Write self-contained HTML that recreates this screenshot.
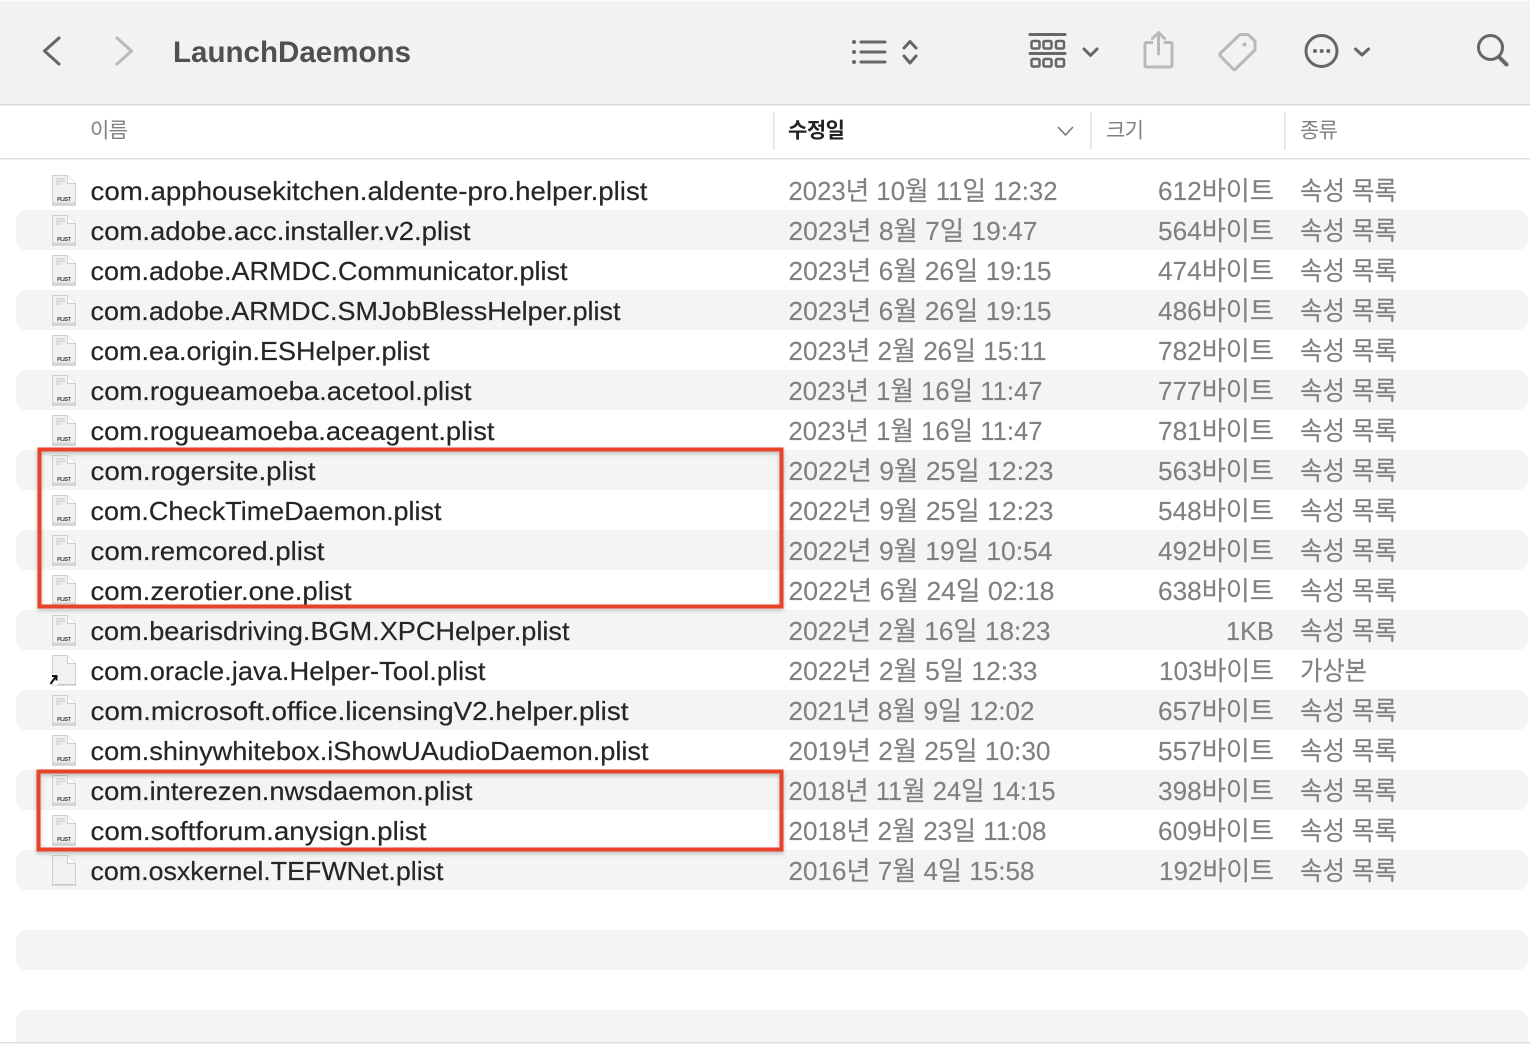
<!DOCTYPE html>
<html lang="ko"><head><meta charset="utf-8"><title>LaunchDaemons</title>
<style>
html,body{margin:0;padding:0;background:#fff;width:1530px;height:1052px;overflow:hidden}
svg{display:block}
text{font-family:"Liberation Sans","Noto Sans CJK KR",sans-serif}
.n{font-size:26px;fill:#262626;stroke:#262626;stroke-width:.2}
.g{font-size:26px;fill:#808080;stroke:#808080;stroke-width:.15}
.h{font-size:21px;fill:#808080}
.p{font-size:5.500px;fill:#444;font-weight:bold}
.s{fill:#f3f5f5}
.t{fill:none;stroke:#666;stroke-width:3;stroke-linecap:round;stroke-linejoin:round}
.l{fill:none;stroke:#b9b9b9;stroke-width:3;stroke-linecap:round;stroke-linejoin:round}
.r{fill:none;stroke:#e8432a;stroke-width:4;filter:drop-shadow(0 2px 2px rgba(0,0,0,.25))}
</style></head><body>
<svg width="1530" height="1052" viewBox="0 0 1530 1052" xmlns="http://www.w3.org/2000/svg">
<defs>
<g id="doc"><path d="M52.500 5.500H67.500L75.500 13.500V34.500H52.500Z" fill="#f1f1f1" stroke="#cfcfcf"/><path d="M67.500 5.500V13.500H75.500" fill="#fff" stroke="#cfcfcf"/><rect x="52" y="34.500" width="24" height="1" fill="#bdbdbd"/></g>
<g id="pl"><use href="#doc"/><path d="M56 9H65M56 11.500H65M56 14H61" stroke="#d0d0d0" stroke-width="1.200"/><rect x="53" y="32" width="22" height="2.500" fill="#dcdcdc"/></g>
</defs>
<rect width="1530" height="1052" fill="#fff"/>
<rect width="1530" height="104" fill="#f2f2f2"/>
<rect width="1530" height="1" fill="#fafafa"/>
<rect y="104" width="1530" height="1.500" fill="#d9d9d9"/>
<rect y="158" width="1530" height="1.500" fill="#dedede"/>
<rect x="773" y="112" width="1.500" height="38" fill="#e2e2e2"/>
<rect x="1090" y="112" width="1.500" height="38" fill="#e2e2e2"/>
<rect x="1284" y="112" width="1.500" height="38" fill="#e2e2e2"/>

<path class="t" d="M59 38L44.500 51L59 64" stroke="#555"/>
<path class="l" d="M117 38L131.500 51L117 64"/>
<text x="173" y="62" font-size="30" font-weight="bold" fill="#505050" textLength="238" lengthAdjust="spacingAndGlyphs">LaunchDaemons</text>

<g fill="#666"><circle cx="854" cy="42" r="2"/><circle cx="854" cy="52" r="2"/><circle cx="854" cy="62" r="2"/></g>
<path class="t" d="M861 42H885M861 52H885M861 62H885"/>
<path class="t" d="M904 48L910 41.500L916 48M904 56L910 63L916 56"/>
<path class="t" d="M1030 34.500H1065M1030 53.500H1065" stroke-linecap="butt"/>
<g fill="none" stroke="#666" stroke-width="2.500"><rect x="1031.500" y="41" width="8" height="7.500" rx="1.500"/><rect x="1043.500" y="41" width="8" height="7.500" rx="1.500"/><rect x="1056" y="41" width="8" height="7.500" rx="1.500"/><rect x="1031.500" y="59" width="8" height="7.500" rx="1.500"/><rect x="1043.500" y="59" width="8" height="7.500" rx="1.500"/><rect x="1056" y="59" width="8" height="7.500" rx="1.500"/></g>
<path class="t" d="M1084 49L1090.500 55.500L1097 49"/>
<path class="l" d="M1152 42.500H1147Q1145 42.500 1145 44.500V65Q1145 67 1147 67H1170Q1172 67 1172 65V44.500Q1172 42.500 1170 42.500H1165M1158.500 54V33M1152.500 38.500L1158.500 32.500L1164.500 38.500"/>
<path class="l" d="M1220 53.500L1240 34.500H1248L1255 41V50L1235 69.500Q1234 70 1233 69L1220 55.500Q1219.500 54.500 1220 53.500Z"/>
<circle cx="1244.500" cy="44.500" r="2" fill="#b9b9b9"/>
<circle class="t" cx="1321.500" cy="51" r="15.500"/>
<g fill="#666"><circle cx="1315" cy="51" r="2"/><circle cx="1321.700" cy="51" r="2"/><circle cx="1328.300" cy="51" r="2"/></g>
<path class="t" d="M1355.500 49L1362 55L1368.500 49"/>
<circle class="t" cx="1490.500" cy="47.500" r="12"/>
<path d="M1499 57L1506.500 64.500" fill="none" stroke="#666" stroke-width="4" stroke-linecap="round"/>

<text class="h" x="90" y="137.500" textLength="38">이름</text>
<text class="h" x="788" y="137.500" textLength="57" font-weight="bold" style="fill:#222">수정일</text>
<path d="M1058 127L1065.500 135L1073 127" fill="none" stroke="#777" stroke-width="1.600"/>
<text class="h" x="1106" y="137.500" textLength="38">크기</text>
<text class="h" x="1300" y="137.500" textLength="38">종류</text>

<rect class="s" x="16" y="210" width="1512" height="40" rx="10"/>
<rect class="s" x="16" y="290" width="1512" height="40" rx="10"/>
<rect class="s" x="16" y="370" width="1512" height="40" rx="10"/>
<rect class="s" x="16" y="450" width="1512" height="40" rx="10"/>
<rect class="s" x="16" y="530" width="1512" height="40" rx="10"/>
<rect class="s" x="16" y="610" width="1512" height="40" rx="10"/>
<rect class="s" x="16" y="690" width="1512" height="40" rx="10"/>
<rect class="s" x="16" y="770" width="1512" height="40" rx="10"/>
<rect class="s" x="16" y="850" width="1512" height="40" rx="10"/>
<rect class="s" x="16" y="930" width="1512" height="40" rx="10"/>
<rect class="s" x="16" y="1010" width="1512" height="40" rx="10"/>
<rect y="1043" width="1530" height="9" fill="#fff"/>
<rect y="1042" width="1530" height="1.500" fill="#dedede"/>

<g transform="translate(0,170)"><use href="#pl"/><text class="p" x="57" y="31" textLength="14">PLIST</text></g>
<g transform="translate(0,210)"><use href="#pl"/><text class="p" x="57" y="31" textLength="14">PLIST</text></g>
<g transform="translate(0,250)"><use href="#pl"/><text class="p" x="57" y="31" textLength="14">PLIST</text></g>
<g transform="translate(0,290)"><use href="#pl"/><text class="p" x="57" y="31" textLength="14">PLIST</text></g>
<g transform="translate(0,330)"><use href="#pl"/><text class="p" x="57" y="31" textLength="14">PLIST</text></g>
<g transform="translate(0,370)"><use href="#pl"/><text class="p" x="57" y="31" textLength="14">PLIST</text></g>
<g transform="translate(0,410)"><use href="#pl"/><text class="p" x="57" y="31" textLength="14">PLIST</text></g>
<g transform="translate(0,450)"><use href="#pl"/><text class="p" x="57" y="31" textLength="14">PLIST</text></g>
<g transform="translate(0,490)"><use href="#pl"/><text class="p" x="57" y="31" textLength="14">PLIST</text></g>
<g transform="translate(0,530)"><use href="#pl"/><text class="p" x="57" y="31" textLength="14">PLIST</text></g>
<g transform="translate(0,570)"><use href="#pl"/><text class="p" x="57" y="31" textLength="14">PLIST</text></g>
<g transform="translate(0,610)"><use href="#pl"/><text class="p" x="57" y="31" textLength="14">PLIST</text></g>
<g transform="translate(0,650)"><use href="#doc"/><rect x="49" y="24" width="9" height="11" rx="1" fill="#fff"/><path d="M50.500 34L55.500 27M52 26H56.500V30.500" fill="none" stroke="#111" stroke-width="2"/></g>
<g transform="translate(0,690)"><use href="#pl"/><text class="p" x="57" y="31" textLength="14">PLIST</text></g>
<g transform="translate(0,730)"><use href="#pl"/><text class="p" x="57" y="31" textLength="14">PLIST</text></g>
<g transform="translate(0,770)"><use href="#pl"/><text class="p" x="57" y="31" textLength="14">PLIST</text></g>
<g transform="translate(0,810)"><use href="#pl"/><text class="p" x="57" y="31" textLength="14">PLIST</text></g>
<g transform="translate(0,850)"><use href="#doc"/></g>

<g transform="translate(0,1)">
<text class="n" x="90.500" y="199" textLength="557" lengthAdjust="spacingAndGlyphs">com.apphousekitchen.aldente-pro.helper.plist</text>
<text class="g" x="788.500" y="199" textLength="269" lengthAdjust="spacingAndGlyphs">2023년 10월 11일 12:32</text>
<text class="g" x="1158" y="199" textLength="116" lengthAdjust="spacingAndGlyphs">612바이트</text>
<text class="g" x="1300" y="199" textLength="97" lengthAdjust="spacingAndGlyphs">속성 목록</text>

<text class="n" x="90.500" y="239" textLength="380" lengthAdjust="spacingAndGlyphs">com.adobe.acc.installer.v2.plist</text>
<text class="g" x="788.500" y="239" textLength="249" lengthAdjust="spacingAndGlyphs">2023년 8월 7일 19:47</text>
<text class="g" x="1158" y="239" textLength="116" lengthAdjust="spacingAndGlyphs">564바이트</text>
<text class="g" x="1300" y="239" textLength="97" lengthAdjust="spacingAndGlyphs">속성 목록</text>

<text class="n" x="90.500" y="279" textLength="477" lengthAdjust="spacingAndGlyphs">com.adobe.ARMDC.Communicator.plist</text>
<text class="g" x="788.500" y="279" textLength="263" lengthAdjust="spacingAndGlyphs">2023년 6월 26일 19:15</text>
<text class="g" x="1158" y="279" textLength="116" lengthAdjust="spacingAndGlyphs">474바이트</text>
<text class="g" x="1300" y="279" textLength="97" lengthAdjust="spacingAndGlyphs">속성 목록</text>

<text class="n" x="90.500" y="319" textLength="530" lengthAdjust="spacingAndGlyphs">com.adobe.ARMDC.SMJobBlessHelper.plist</text>
<text class="g" x="788.500" y="319" textLength="263" lengthAdjust="spacingAndGlyphs">2023년 6월 26일 19:15</text>
<text class="g" x="1158" y="319" textLength="116" lengthAdjust="spacingAndGlyphs">486바이트</text>
<text class="g" x="1300" y="319" textLength="97" lengthAdjust="spacingAndGlyphs">속성 목록</text>

<text class="n" x="90.500" y="359" textLength="339" lengthAdjust="spacingAndGlyphs">com.ea.origin.ESHelper.plist</text>
<text class="g" x="788.500" y="359" textLength="258" lengthAdjust="spacingAndGlyphs">2023년 2월 26일 15:11</text>
<text class="g" x="1158" y="359" textLength="116" lengthAdjust="spacingAndGlyphs">782바이트</text>
<text class="g" x="1300" y="359" textLength="97" lengthAdjust="spacingAndGlyphs">속성 목록</text>

<text class="n" x="90.500" y="399" textLength="381" lengthAdjust="spacingAndGlyphs">com.rogueamoeba.acetool.plist</text>
<text class="g" x="788.500" y="399" textLength="254" lengthAdjust="spacingAndGlyphs">2023년 1월 16일 11:47</text>
<text class="g" x="1158" y="399" textLength="116" lengthAdjust="spacingAndGlyphs">777바이트</text>
<text class="g" x="1300" y="399" textLength="97" lengthAdjust="spacingAndGlyphs">속성 목록</text>

<text class="n" x="90.500" y="439" textLength="404" lengthAdjust="spacingAndGlyphs">com.rogueamoeba.aceagent.plist</text>
<text class="g" x="788.500" y="439" textLength="254" lengthAdjust="spacingAndGlyphs">2023년 1월 16일 11:47</text>
<text class="g" x="1158" y="439" textLength="116" lengthAdjust="spacingAndGlyphs">781바이트</text>
<text class="g" x="1300" y="439" textLength="97" lengthAdjust="spacingAndGlyphs">속성 목록</text>

<text class="n" x="90.500" y="479" textLength="225" lengthAdjust="spacingAndGlyphs">com.rogersite.plist</text>
<text class="g" x="788.500" y="479" textLength="265" lengthAdjust="spacingAndGlyphs">2022년 9월 25일 12:23</text>
<text class="g" x="1158" y="479" textLength="116" lengthAdjust="spacingAndGlyphs">563바이트</text>
<text class="g" x="1300" y="479" textLength="97" lengthAdjust="spacingAndGlyphs">속성 목록</text>

<text class="n" x="90.500" y="519" textLength="351" lengthAdjust="spacingAndGlyphs">com.CheckTimeDaemon.plist</text>
<text class="g" x="788.500" y="519" textLength="265" lengthAdjust="spacingAndGlyphs">2022년 9월 25일 12:23</text>
<text class="g" x="1158" y="519" textLength="116" lengthAdjust="spacingAndGlyphs">548바이트</text>
<text class="g" x="1300" y="519" textLength="97" lengthAdjust="spacingAndGlyphs">속성 목록</text>

<text class="n" x="90.500" y="559" textLength="234" lengthAdjust="spacingAndGlyphs">com.remcored.plist</text>
<text class="g" x="788.500" y="559" textLength="264" lengthAdjust="spacingAndGlyphs">2022년 9월 19일 10:54</text>
<text class="g" x="1158" y="559" textLength="116" lengthAdjust="spacingAndGlyphs">492바이트</text>
<text class="g" x="1300" y="559" textLength="97" lengthAdjust="spacingAndGlyphs">속성 목록</text>

<text class="n" x="90.500" y="599" textLength="261" lengthAdjust="spacingAndGlyphs">com.zerotier.one.plist</text>
<text class="g" x="788.500" y="599" textLength="266" lengthAdjust="spacingAndGlyphs">2022년 6월 24일 02:18</text>
<text class="g" x="1158" y="599" textLength="116" lengthAdjust="spacingAndGlyphs">638바이트</text>
<text class="g" x="1300" y="599" textLength="97" lengthAdjust="spacingAndGlyphs">속성 목록</text>

<text class="n" x="90.500" y="639" textLength="479" lengthAdjust="spacingAndGlyphs">com.bearisdriving.BGM.XPCHelper.plist</text>
<text class="g" x="788.500" y="639" textLength="262" lengthAdjust="spacingAndGlyphs">2022년 2월 16일 18:23</text>
<text class="g" x="1226" y="639" textLength="48" lengthAdjust="spacingAndGlyphs">1KB</text>
<text class="g" x="1300" y="639" textLength="97" lengthAdjust="spacingAndGlyphs">속성 목록</text>

<text class="n" x="90.500" y="679" textLength="395" lengthAdjust="spacingAndGlyphs">com.oracle.java.Helper-Tool.plist</text>
<text class="g" x="788.500" y="679" textLength="249" lengthAdjust="spacingAndGlyphs">2022년 2월 5일 12:33</text>
<text class="g" x="1159" y="679" textLength="115" lengthAdjust="spacingAndGlyphs">103바이트</text>
<text class="g" x="1300" y="679" textLength="67" lengthAdjust="spacingAndGlyphs">가상본</text>

<text class="n" x="90.500" y="719" textLength="538" lengthAdjust="spacingAndGlyphs">com.microsoft.office.licensingV2.helper.plist</text>
<text class="g" x="788.500" y="719" textLength="246" lengthAdjust="spacingAndGlyphs">2021년 8월 9일 12:02</text>
<text class="g" x="1158" y="719" textLength="116" lengthAdjust="spacingAndGlyphs">657바이트</text>
<text class="g" x="1300" y="719" textLength="97" lengthAdjust="spacingAndGlyphs">속성 목록</text>

<text class="n" x="90.500" y="759" textLength="558" lengthAdjust="spacingAndGlyphs">com.shinywhitebox.iShowUAudioDaemon.plist</text>
<text class="g" x="788.500" y="759" textLength="262" lengthAdjust="spacingAndGlyphs">2019년 2월 25일 10:30</text>
<text class="g" x="1158" y="759" textLength="116" lengthAdjust="spacingAndGlyphs">557바이트</text>
<text class="g" x="1300" y="759" textLength="97" lengthAdjust="spacingAndGlyphs">속성 목록</text>

<text class="n" x="90.500" y="799" textLength="382" lengthAdjust="spacingAndGlyphs">com.interezen.nwsdaemon.plist</text>
<text class="g" x="788.500" y="799" textLength="267" lengthAdjust="spacingAndGlyphs">2018년 11월 24일 14:15</text>
<text class="g" x="1158" y="799" textLength="116" lengthAdjust="spacingAndGlyphs">398바이트</text>
<text class="g" x="1300" y="799" textLength="97" lengthAdjust="spacingAndGlyphs">속성 목록</text>

<text class="n" x="90.500" y="839" textLength="336" lengthAdjust="spacingAndGlyphs">com.softforum.anysign.plist</text>
<text class="g" x="788.500" y="839" textLength="258" lengthAdjust="spacingAndGlyphs">2018년 2월 23일 11:08</text>
<text class="g" x="1158" y="839" textLength="116" lengthAdjust="spacingAndGlyphs">609바이트</text>
<text class="g" x="1300" y="839" textLength="97" lengthAdjust="spacingAndGlyphs">속성 목록</text>

<text class="n" x="90.500" y="879" textLength="353" lengthAdjust="spacingAndGlyphs">com.osxkernel.TEFWNet.plist</text>
<text class="g" x="788.500" y="879" textLength="246" lengthAdjust="spacingAndGlyphs">2016년 7월 4일 15:58</text>
<text class="g" x="1159" y="879" textLength="115" lengthAdjust="spacingAndGlyphs">192바이트</text>
<text class="g" x="1300" y="879" textLength="97" lengthAdjust="spacingAndGlyphs">속성 목록</text>
</g>

<rect class="r" x="39.500" y="449.500" width="742" height="157"/>
<rect class="r" x="38.500" y="771.500" width="743" height="78"/>
</svg>
</body></html>
